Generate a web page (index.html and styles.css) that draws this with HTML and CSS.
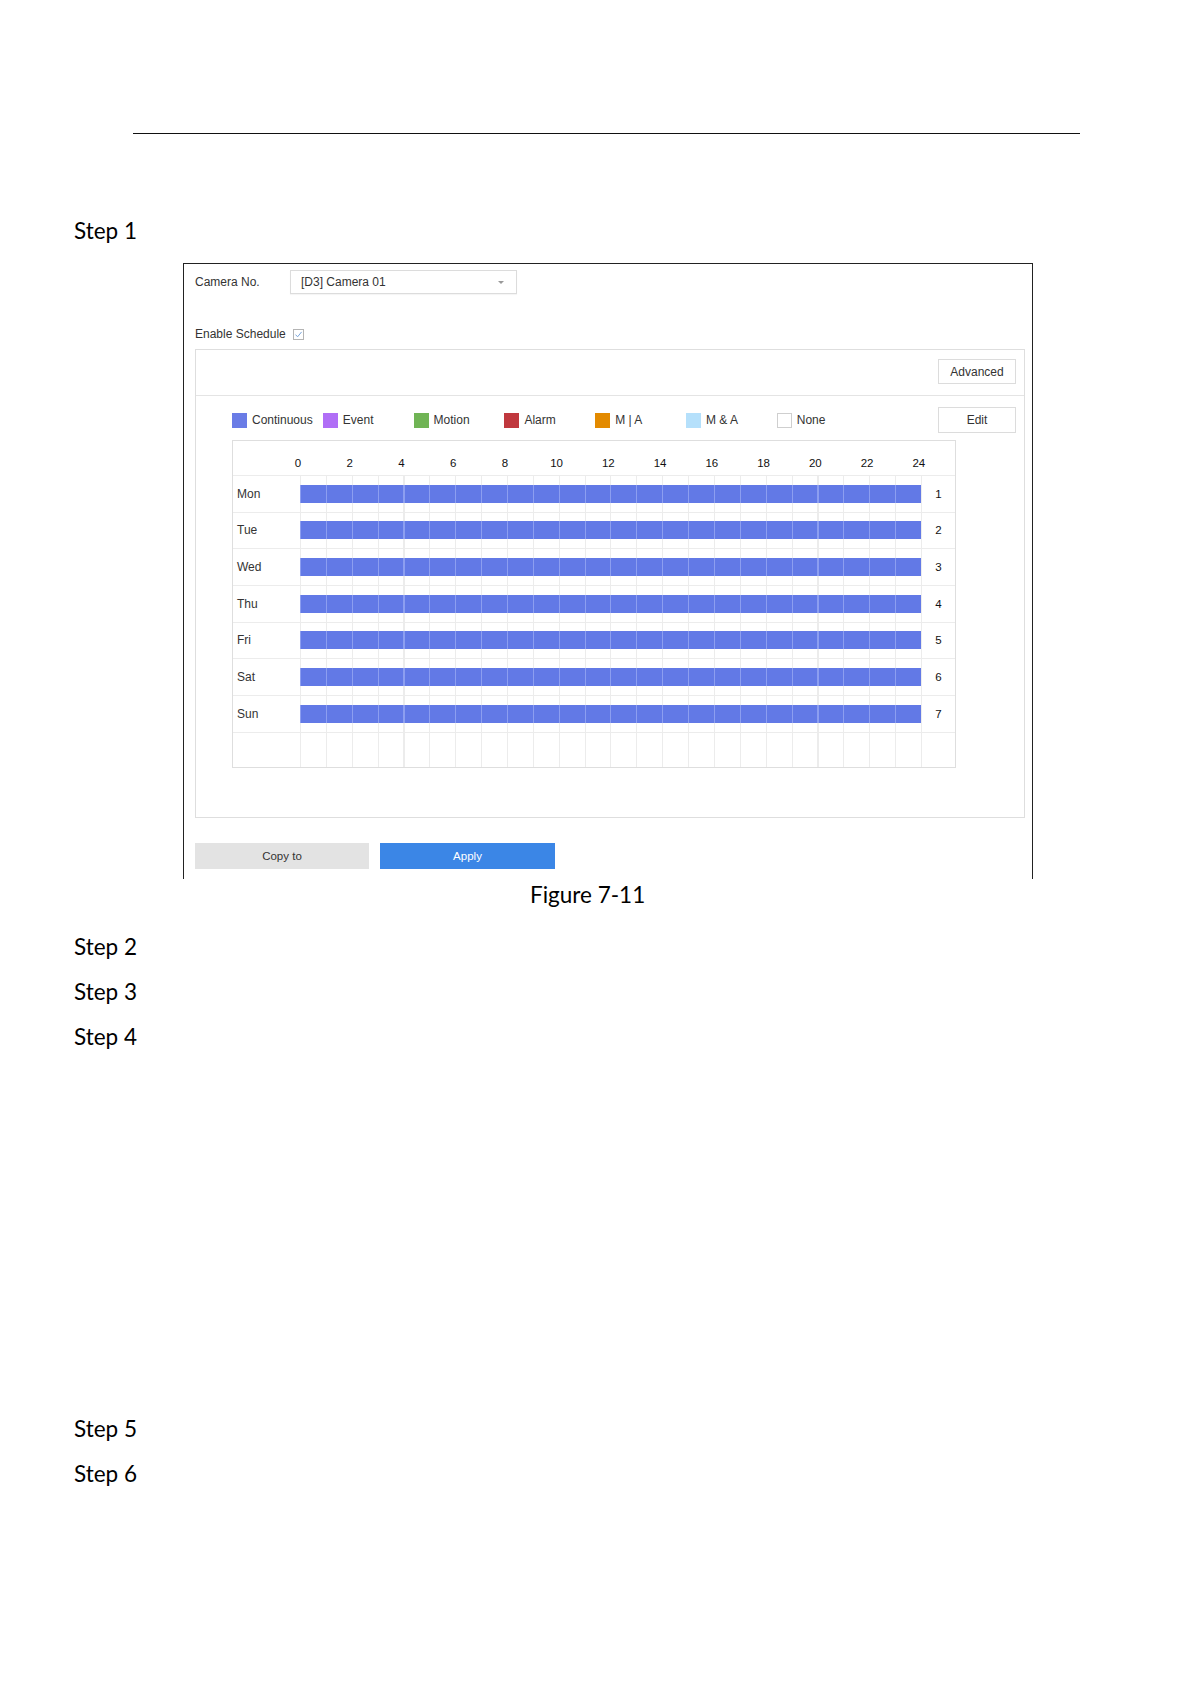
FILE: index.html
```html
<!DOCTYPE html>
<html lang="en">
<head>
    <meta charset="UTF-8">
    <title>Figure 7-11</title>
    <link rel="stylesheet" href="styles.css">
</head>
<body>
    <div class="page">
        <div class="rule"></div>

        <p class="step step-first">Step 1</p>

        <div class="figure">
            <div class="field-row">
                <span class="field-label">Camera No.</span>
                <div class="select">
                    <span>[D3] Camera 01</span>
                    <span class="caret"></span>
                </div>
            </div>

            <div class="enable-row">
                <span>Enable Schedule</span>
                <svg class="check" width="11" height="11" viewBox="0 0 11 11">
                    <rect x="0.5" y="0.5" width="10" height="10" fill="#fff" stroke="#b4b4b4"/>
                    <path d="M2.5 5.6 L4.6 7.8 L8.6 2.9" fill="none" stroke="#7aa6dc" stroke-width="1"/>
                </svg>
            </div>

            <div class="panel">
                <div class="panel-head">
                    <button class="btn-light">Advanced</button>
                </div>

                <div class="legend-row">
                    <div class="legend-item"><span class="swatch continuous"></span>Continuous</div>
                    <div class="legend-item"><span class="swatch event"></span>Event</div>
                    <div class="legend-item"><span class="swatch motion"></span>Motion</div>
                    <div class="legend-item"><span class="swatch alarm"></span>Alarm</div>
                    <div class="legend-item"><span class="swatch m-or-a"></span>M | A</div>
                    <div class="legend-item"><span class="swatch m-and-a"></span>M &amp; A</div>
                    <div class="legend-item"><span class="swatch none"></span>None</div>
                    <button class="btn-light edit-btn">Edit</button>
                </div>

                <div class="schedule">
                    <div class="hours-head">
                        <span>0</span><span>2</span><span>4</span><span>6</span><span>8</span>
                        <span>10</span><span>12</span><span>14</span><span>16</span><span>18</span>
                        <span>20</span><span>22</span><span>24</span>
                    </div>
                    <div class="day-row">
                        <span class="day">Mon</span>
                        <div class="hours"><div class="bar"></div></div>
                        <span class="day-num">1</span>
                    </div>
                    <div class="day-row">
                        <span class="day">Tue</span>
                        <div class="hours"><div class="bar"></div></div>
                        <span class="day-num">2</span>
                    </div>
                    <div class="day-row">
                        <span class="day">Wed</span>
                        <div class="hours"><div class="bar"></div></div>
                        <span class="day-num">3</span>
                    </div>
                    <div class="day-row">
                        <span class="day">Thu</span>
                        <div class="hours"><div class="bar"></div></div>
                        <span class="day-num">4</span>
                    </div>
                    <div class="day-row">
                        <span class="day">Fri</span>
                        <div class="hours"><div class="bar"></div></div>
                        <span class="day-num">5</span>
                    </div>
                    <div class="day-row">
                        <span class="day">Sat</span>
                        <div class="hours"><div class="bar"></div></div>
                        <span class="day-num">6</span>
                    </div>
                    <div class="day-row">
                        <span class="day">Sun</span>
                        <div class="hours"><div class="bar"></div></div>
                        <span class="day-num">7</span>
                    </div>
                    <div class="day-row empty-row">
                        <span class="day"></span>
                        <div class="hours"></div>
                        <span class="day-num"></span>
                    </div>
                </div>
            </div>

            <div class="actions">
                <button class="btn-copy">Copy to</button>
                <button class="btn-apply">Apply</button>
            </div>
        </div>

        <p class="caption">Figure 7-11</p>

        <p class="step step-2">Step 2</p>
        <p class="step">Step 3</p>
        <p class="step">Step 4</p>
        <p class="step step-5">Step 5</p>
        <p class="step">Step 6</p>
    </div>
</body>
</html>
```

FILE: styles.css
```css
body {
    margin: 0;
    background: #fff;
    font-family: 'Lato', 'Open Sans', sans-serif;
    color: #000;
}

.page {
    width: 1191px;
    padding-top: 133px;
}

.rule {
    margin-left: 133px;
    width: 947px;
    border-top: 1px solid #111;
}

/* document text */
.step {
    margin: 15px 0 0 74px;
    font-size: 22.5px;
    line-height: 30px;
}

.step-first {
    margin-top: 82px;
}

.step-2 {
    margin-top: 22px;
}

.step-5 {
    margin-top: 362px;
}

.caption {
    margin: 1px 0 0;
    padding-left: 530px;
    font-size: 22.5px;
    line-height: 30px;
}

/* screenshot frame */
.figure {
    margin: 17px 0 0 183px;
    width: 837px;
    border: 1px solid #222;
    border-bottom: none;
    padding: 6px 0 10px 11px;
    box-sizing: content-box;
    font-family: 'Liberation Sans', Arial, sans-serif;
    font-size: 12px;
    color: #333;
}

.field-row {
    display: flex;
    align-items: center;
    height: 24px;
}

.field-label {
    width: 95px;
}

.select {
    width: 227px;
    height: 24px;
    box-sizing: border-box;
    border: 1px solid #dcdcdc;
    box-shadow: 0 1px 1px rgba(0,0,0,0.04);
    display: flex;
    align-items: center;
    justify-content: space-between;
    padding: 0 12px 0 10px;
    color: #333;
}

.caret {
    width: 0;
    height: 0;
    border-left: 3px solid transparent;
    border-right: 3px solid transparent;
    border-top: 3px solid #999;
}

.enable-row {
    display: flex;
    align-items: center;
    gap: 7px;
    height: 20px;
    margin-top: 30px;
}

.panel {
    margin-top: 5px;
    width: 830px;
    height: 469px;
    box-sizing: border-box;
    border: 1px solid #dedede;
}

.panel-head {
    height: 46px;
    box-sizing: border-box;
    border-bottom: 1px solid #e4e4e4;
    padding: 9px 8px 0 0;
    display: flex;
    justify-content: flex-end;
}

.btn-light {
    width: 78px;
    height: 25px;
    background: #fff;
    border: 1px solid #dcdcdc;
    font-family: 'Liberation Sans', Arial, sans-serif;
    font-size: 12px;
    color: #333;
    padding: 0;
}

.legend-row {
    display: flex;
    align-items: center;
    padding: 11px 8px 0 36px;
    height: 26px;
}

.legend-item {
    display: flex;
    align-items: center;
    gap: 5px;
    width: 90.8px;
    flex-shrink: 0;
}

.swatch {
    width: 15px;
    height: 15px;
    box-sizing: border-box;
}

.continuous { background: #6a7ce6; }
.event { background: #b06ef6; }
.motion { background: #70b455; }
.alarm { background: #c0383e; }
.m-or-a { background: #e38a00; }
.m-and-a { background: #b5e0fb; }
.none { background: #fff; border: 1px solid #cfcfcf; }

.edit-btn {
    margin-left: auto;
    height: 26px;
}

/* schedule grid */
.schedule {
    margin: 7px 0 0 36px;
    width: 724px;
    box-sizing: border-box;
    border: 1px solid #dedede;
}

.hours-head {
    height: 35px;
    box-sizing: border-box;
    border-bottom: 1px solid #ececec;
    display: flex;
    padding: 15px 0 0 39px;
    line-height: 14px;
    font-size: 11.5px;
    color: #111;
}

.hours-head span {
    width: 51.75px;
    flex-shrink: 0;
    text-align: center;
}

.day-row {
    display: flex;
    align-items: center;
    height: 36.67px;
    box-sizing: border-box;
    border-bottom: 1px solid #ececec;
}

.empty-row {
    height: 34px;
    border-bottom: none;
}

.day {
    width: 63px;
    padding-left: 4px;
}

.hours {
    width: 621px;
    align-self: stretch;
    display: flex;
    align-items: center;
    border-right: 1px solid #ececec;
    background: repeating-linear-gradient(to right, #ececec 0 1px, transparent 1px 25.875px);
}

.bar {
    width: 100%;
    height: 18px;
    background: repeating-linear-gradient(to right, #8c9ef0 0 1px, #6279e6 1px 25.875px);
}

.day-num {
    width: 33px;
    text-align: center;
    color: #111;
    font-size: 11.5px;
}

/* bottom buttons */
.actions {
    display: flex;
    gap: 11px;
    margin-top: 25px;
}

.btn-copy,
.btn-apply {
    width: 174px;
    height: 26px;
    border: none;
    font-family: 'Liberation Sans', Arial, sans-serif;
    font-size: 11.5px;
    padding: 0;
}

.btn-copy {
    background: #e3e3e3;
    color: #333;
}

.btn-apply {
    width: 175px;
    background: #3b86e6;
    color: #fff;
}
```
